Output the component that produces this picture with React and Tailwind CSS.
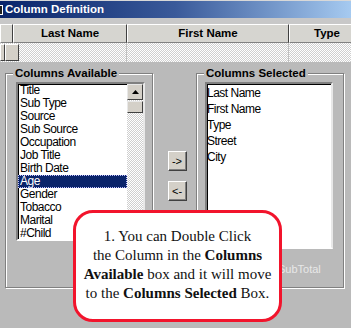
import React from "react";

const ui = { fontFamily: '"Liberation Sans", Arial, sans-serif' };
const serif = { fontFamily: '"Liberation Serif", "Times New Roman", serif' };

const available = ["Title", "Sub Type", "Source", "Sub Source", "Occupation", "Job Title", "Birth Date", "Age", "Gender", "Tobacco", "Marital", "#Child"];
const selected = ["Last Name", "First Name", "Type", "Street", "City"];

function GroupBox({ label, children, className }) {
  return (
    <div className={"relative border border-[#808080] shadow-[1px_1px_0_#ffffff,inset_1px_1px_0_#ffffff] " + className}>
      <div className="absolute -top-[8px] left-[7px] px-[2px] bg-[#bababa] text-[11.5px] font-bold leading-[14px] text-black" style={ui}>
        {label}
      </div>
      {children}
    </div>
  );
}

function ArrowButton({ children }) {
  return (
    <div className="w-[19px] h-[20px] bg-[#d4d0c8] border border-t-white border-l-white border-r-[#404040] border-b-[#404040] shadow-[inset_-1px_-1px_0_#808080] flex items-center justify-center text-[11px] leading-none text-black" style={ui}>
      {children}
    </div>
  );
}

export default function App() {
  return (
    <div className="w-[351px] h-[328px] relative overflow-hidden flex flex-col bg-[#bababa]" style={ui}>
      <div className="h-[1px] bg-[#d8d8d8]" />
      <div className="h-[17px] flex items-center bg-gradient-to-r from-[#0a246a] via-[#3a5a9a] to-[#a6caf0]">
        <div className="w-[3px] h-[10px] border-y border-r border-white bg-[#202020]" />
        <span className="ml-[2px] mt-[1px] text-white text-[11.5px] font-bold leading-none" style={ui}>Column Definition</span>
      </div>
      <div className="h-[6px] bg-[#c8c8c8]" />
      <div className="h-[19px] flex overflow-hidden">
        {[
          ["", "w-[13px]"],
          ["Last Name", "w-[114px]"],
          ["First Name", "w-[162px]"],
          ["Type", "w-[76px]"],
        ].map(([t, w], i) => (
          <div key={i} className={"shrink-0 h-full flex items-center justify-center bg-[#d6d5d0] border-t border-l border-t-white border-l-white border-r border-b border-r-[#404040] border-b-[#808080] text-[11.5px] font-bold text-black " + w} style={ui}>
            {t}
          </div>
        ))}
      </div>
      <div className="h-[19px] flex bg-[repeating-conic-gradient(#ffffff_0%_25%,#cfcfcf_0%_50%)] bg-[length:2px_2px]">
        <div className="w-[5px] h-[17px] mt-[1px] bg-[#d4d0c8] border border-t-white border-l-white border-r-[#404040] border-b-[#404040]" />
        <div className="w-[14px] h-[17px] mt-[1px] bg-[#d4d0c8] border border-t-white border-l-white border-r-[#404040] border-b-[#404040]" />
        <div className="w-[108px] h-full border-r border-[#c0c0c0]" />
        <div className="w-[162px] h-full border-r border-[#c0c0c0]" />
      </div>
      <div className="flex-1 flex items-start bg-[#bababa] pt-[11px]">
        <GroupBox label="Columns Available" className="ml-[5px] w-[148px] h-[215px] pt-[8px] pl-[10px]">
          <div className="w-[129px] h-[159px] flex bg-white border-2 border-t-[#808080] border-l-[#808080] border-r-[#e8e8e8] border-b-[#ffffff] shadow-[inset_1px_1px_0_#000000] overflow-hidden">
            <div className="flex-1 overflow-hidden" style={ui}>
              {available.map((t) => (
                <div key={t} className={"h-[13px] pl-[2px] text-[12px] tracking-[-0.5px] leading-[13px] whitespace-nowrap " + (t === "Age" ? "bg-[#0a246a] text-white outline-1 outline-dotted outline-[#c0c0ff] -outline-offset-1" : "text-black")}>
                  {t}
                </div>
              ))}
            </div>
            <div className="w-[16px] flex flex-col bg-[repeating-conic-gradient(#ffffff_0%_25%,#cfcfcf_0%_50%)] bg-[length:2px_2px]">
              <div className="h-[16px] bg-[#d4d0c8] border border-t-[#e8e8e8] border-l-[#e8e8e8] border-r-[#404040] border-b-[#404040] flex items-center justify-center">
                <svg width="7" height="4" viewBox="0 0 7 4"><path d="M3.5 0 L7 4 L0 4 Z" fill="#000" /></svg>
              </div>
              <div className="h-[12px] mt-[1px] bg-[#d4d0c8] border border-t-[#e8e8e8] border-l-[#e8e8e8] border-r-[#404040] border-b-[#404040]" />
            </div>
          </div>
        </GroupBox>
        <div className="w-[43px] flex flex-col items-center pt-[78px] gap-[10px] pl-[5px]">
          <ArrowButton>-&gt;</ArrowButton>
          <ArrowButton>&lt;-</ArrowButton>
        </div>
        <GroupBox label="Columns Selected" className="w-[148px] h-[215px] pt-[8px] pl-[8px]">
          <div className="w-[128px] h-[167px] bg-white border-2 border-t-[#808080] border-l-[#808080] border-r-[#e8e8e8] border-b-[#ffffff] shadow-[inset_1px_1px_0_#000000] pt-[1px] overflow-hidden" style={ui}>
            {selected.map((t) => (
              <div key={t} className="h-[16px] text-[12px] tracking-[-0.5px] leading-[16px] text-black whitespace-nowrap">
                {t}
              </div>
            ))}
          </div>
          <div className="mt-[13px] pl-[73px] text-[11px] leading-[14px] text-[#e8e8e8]" style={ui}>SubTotal</div>
        </GroupBox>
      </div>
      <div className="absolute left-[73px] top-[210px] w-[209px] h-[112px] bg-white border-[3px] border-[#f2142c] rounded-[20px] pt-[14px] text-center text-[15px] leading-[19px] text-[#111]" style={serif}>
        <div>1. You can Double Click</div>
        <div>the Column in the <b>Columns</b></div>
        <div><b>Available</b> box and it will move</div>
        <div>to the <b>Columns Selected</b> Box.</div>
      </div>
    </div>
  );
}
